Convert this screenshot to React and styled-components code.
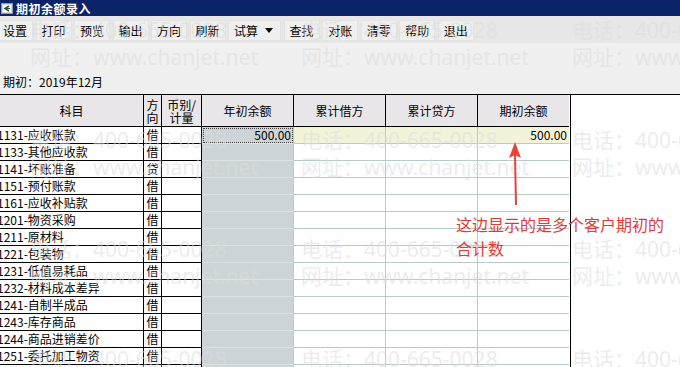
import styled, { createGlobalStyle } from "styled-components";

const GlobalStyle = createGlobalStyle`
  html, body {
    margin: 0;
    padding: 0;
    overflow: hidden;
    background: #f0f0f0;
  }
  body {
    font-family: "Noto Sans CJK SC", "Noto Sans", sans-serif;
    font-size: 12px;
    color: #000;
  }
`;

const Window = styled.div`
  position: relative;
  display: flex;
  flex-direction: column;
  width: 680px;
  height: 367px;
  overflow: hidden;
  background: #f0f0f0;
`;

const TitleBar = styled.div`
  display: flex;
  align-items: center;
  gap: 3px;
  height: 16px;
  padding-left: 1px;
  background: #0b2469;
  color: #fff;
  font-weight: bold;
  font-size: 12px;
  letter-spacing: 0.5px;
`;

const Toolbar = styled.div`
  display: flex;
  align-items: center;
  gap: 2.5px;
  height: 27px;
  margin-left: -3px;
  padding-top: 1px;
  box-sizing: border-box;
  background: #e7e7e7;
`;

const ToolButton = styled.div`
  display: flex;
  align-items: center;
  gap: 7px;
  height: 21px;
  padding: 0 ${(p) => (p.$menu ? "7px" : "5px")} 0 5px;
  background: #efefef;
  border: 1px solid #e3e3e3;
  box-sizing: border-box;
  white-space: nowrap;
`;

const Caret = styled.span`
  width: 0;
  height: 0;
  border-left: 4px solid transparent;
  border-right: 4px solid transparent;
  border-top: 5px solid #000;
`;

const PeriodBar = styled.div`
  display: flex;
  align-items: flex-end;
  height: 51px;
  padding: 0 0 4px 3px;
  box-sizing: border-box;
`;

const GridArea = styled.div`
  flex: 1;
  background: #fff;
  border-top: 1px solid #000;
  overflow: hidden;
`;

const Sheet = styled.div`
  width: 571px;
  border-right: 1px solid #000;
  box-sizing: border-box;
`;

const Row = styled.div`
  display: grid;
  grid-template-columns: 144px 18px 40px 92px 92px 92px 91px;
  height: ${(p) => (p.$head ? "32px" : "17px")};
`;

const HeadCell = styled.div`
  display: flex;
  align-items: center;
  justify-content: center;
  text-align: center;
  line-height: 13px;
  background: #e8e6e9;
  border-right: ${(p) => (p.$last ? "none" : "1px solid #000")};
  border-bottom: 1px solid #000;
  box-sizing: border-box;
`;

const CodeCell = styled.div`
  display: flex;
  align-items: center;
  justify-content: ${(p) => (p.$center ? "center" : "flex-start")};
  text-indent: ${(p) => (p.$center ? "0" : "-3px")};
  border-right: 1px solid #000;
  border-bottom: 1px solid #000;
  box-sizing: border-box;
  overflow: hidden;
  white-space: nowrap;
  line-height: 16px;
`;

const tones = {
  opening: { bg: "#cdd4d7", bottom: "#dce2e3" },
  plain: { bg: "#fff", bottom: "#b8cbc9" },
  current: { bg: "#f3f3da", bottom: "#b8cbc9" },
};

const AmountCell = styled.div`
  display: flex;
  align-items: center;
  justify-content: flex-end;
  padding-right: 2px;
  background: ${(p) => tones[p.$tone].bg};
  border-right: ${(p) => (p.$last ? "none" : "1px solid #b8cbc9")};
  border-bottom: 1px solid ${(p) => tones[p.$tone].bottom};
  outline: ${(p) => (p.$focus ? "1px dotted #444" : "none")};
  outline-offset: -2px;
  box-sizing: border-box;
  line-height: 16px;
`;

const Watermarks = styled.div`
  position: absolute;
  inset: 0;
  display: grid;
  grid-template-columns: repeat(3, 271px);
  grid-auto-rows: 109.5px;
  padding: 17px 0 0 30px;
  pointer-events: none;
  overflow: hidden;
`;

const Mark = styled.div`
  display: flex;
  flex-direction: column;
  font-family: "Noto Sans", "Noto Sans CJK SC", sans-serif;
  font-size: 21px;
  line-height: 27px;
  color: rgba(220, 220, 220, 0.55);
  white-space: nowrap;
`;

const Note = styled.div`
  position: absolute;
  left: 456px;
  top: 212px;
  font-size: 16px;
  line-height: 24px;
  color: #e33a36;
`;

const Arrow = styled.svg`
  position: absolute;
  left: 505px;
  top: 138px;
`;

const entries = [
  ["1131-应收账款", "借"],
  ["1133-其他应收款", "借"],
  ["1141-坏账准备", "贷"],
  ["1151-预付账款", "借"],
  ["1161-应收补贴款", "借"],
  ["1201-物资采购", "借"],
  ["1211-原材料", "借"],
  ["1221-包装物", "借"],
  ["1231-低值易耗品", "借"],
  ["1232-材料成本差异", "借"],
  ["1241-自制半成品", "借"],
  ["1243-库存商品", "借"],
  ["1244-商品进销差价", "借"],
  ["1251-委托加工物资", "借"],
  ["", ""],
];

const tools = ["设置", "打印", "预览", "输出", "方向", "刷新", "试算", "查找", "对账", "清零", "帮助", "退出"];

function WindowIcon() {
  return (
    <svg width="12" height="11" viewBox="0 0 12 11">
      <rect x="0.5" y="0.5" width="11" height="10" fill="#d8d8d8" stroke="#9a9a9a" />
      <rect x="2" y="2" width="8" height="7" fill="#fff" />
      <path d="M8 3 L4 5.5 L8 8" stroke="#1d5a3c" strokeWidth="1.5" fill="none" />
      <path d="M3 5.5 H9" stroke="#1d5a3c" strokeWidth="1" />
    </svg>
  );
}

export default function App() {
  return (
    <Window>
      <GlobalStyle />
      <TitleBar>
        <WindowIcon />
        <span>期初余额录入</span>
      </TitleBar>
      <Toolbar>
        {tools.map((t) => (
          <ToolButton key={t} $menu={t === "试算"}>
            {t}
            {t === "试算" && <Caret />}
          </ToolButton>
        ))}
      </Toolbar>
      <PeriodBar>期初：2019年12月</PeriodBar>
      <GridArea>
        <Sheet>
          <Row $head>
            <HeadCell>科目</HeadCell>
            <HeadCell>方<br />向</HeadCell>
            <HeadCell>币别/<br />计量</HeadCell>
            <HeadCell>年初余额</HeadCell>
            <HeadCell>累计借方</HeadCell>
            <HeadCell>累计贷方</HeadCell>
            <HeadCell $last>期初余额</HeadCell>
          </Row>
          {entries.map(([name, dir], i) => {
            const first = i === 0;
            const tone = first ? "current" : "plain";
            return (
              <Row key={i}>
                <CodeCell>{name}</CodeCell>
                <CodeCell $center>{dir}</CodeCell>
                <CodeCell />
                <AmountCell $tone="opening" $focus={first}>{first ? "500.00" : ""}</AmountCell>
                <AmountCell $tone={tone} />
                <AmountCell $tone={tone} />
                <AmountCell $tone={tone} $last>{first ? "500.00" : ""}</AmountCell>
              </Row>
            );
          })}
        </Sheet>
      </GridArea>
      <Watermarks>
        {Array.from({ length: 12 }).map((_, i) => (
          <Mark key={i}>
            <span>电话：400-665-0028</span>
            <span>网址：www.chanjet.net</span>
          </Mark>
        ))}
      </Watermarks>
      <Arrow width="22" height="70" viewBox="0 0 22 70">
        <path d="M10 4 L4 20 L10 17 L16 20 Z" fill="#e8423a" />
        <path d="M10 17 L11 67" stroke="#e8423a" strokeWidth="2" />
      </Arrow>
      <Note>
        这边显示的是多个客户期初的
        <br />
        合计数
      </Note>
    </Window>
  );
}
